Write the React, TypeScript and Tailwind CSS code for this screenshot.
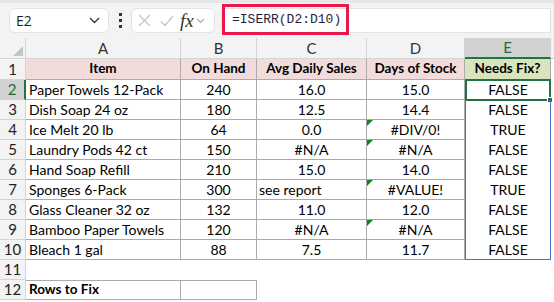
import React from 'react';

type Row = { item: string; onHand: string; avg: string; days: string; fix: string; flag?: boolean; left?: boolean };

const rows: Row[] = [
  { item: 'Paper Towels 12-Pack', onHand: '240', avg: '16.0', days: '15.0', fix: 'FALSE' },
  { item: 'Dish Soap 24 oz', onHand: '180', avg: '12.5', days: '14.4', fix: 'FALSE' },
  { item: 'Ice Melt 20 lb', onHand: '64', avg: '0.0', days: '#DIV/0!', fix: 'TRUE', flag: true },
  { item: 'Laundry Pods 42 ct', onHand: '150', avg: '#N/A', days: '#N/A', fix: 'FALSE', flag: true },
  { item: 'Hand Soap Refill', onHand: '210', avg: '15.0', days: '14.0', fix: 'FALSE' },
  { item: 'Sponges 6-Pack', onHand: '300', avg: 'see report', days: '#VALUE!', fix: 'TRUE', flag: true, left: true },
  { item: 'Glass Cleaner 32 oz', onHand: '132', avg: '11.0', days: '12.0', fix: 'FALSE' },
  { item: 'Bamboo Paper Towels', onHand: '120', avg: '#N/A', days: '#N/A', fix: 'FALSE', flag: true },
  { item: 'Bleach 1 gal', onHand: '88', avg: '7.5', days: '11.7', fix: 'FALSE' },
];

const cols = 'grid grid-cols-[26px_155px_76px_110px_98px_86px_3px]';
const cell = 'border-r border-b border-[#ababab] flex items-center justify-center';
const rowHead = 'bg-[#f3f3f3] border-r border-b border-[#d4d4d4] flex items-center justify-center text-[#222] text-[15px]';

function Flag() {
  return <span className="absolute left-0 top-0 w-0 h-0 border-t-[6px] border-r-[6px] border-t-[#1a7f2a] border-r-transparent" />;
}

export default function App() {
  return (
    <div className="w-[554px] h-[302px] bg-white overflow-hidden text-[14px] leading-none text-black" style={{ fontFamily: 'Lato, "Liberation Sans", sans-serif' }}>
      {/* formula bar */}
      <div className="relative h-[38px] bg-[#f3f3f3] border-t-[3px] border-[#e6e6e6] flex items-center pl-[9px] pr-[3px]">
        <div className="w-[100px] h-[25px] rounded-md bg-white border border-[#e3e3e3] flex items-center justify-between pl-[6px] pr-[8px] text-[14px] text-[#1f1f1f]" style={{ fontFamily: '"Open Sans", sans-serif' }}>
          <span>E2</span>
          <svg width="11" height="7" viewBox="0 0 11 7"><path d="M1 1l4.5 4.5L10 1" fill="none" stroke="#333" strokeWidth="1.3" /></svg>
        </div>
        <div className="w-[22px] flex flex-col items-center gap-[3px]">
          <span className="w-[3px] h-[3px] bg-[#333]" />
          <span className="w-[3px] h-[3px] bg-[#333]" />
          <span className="w-[3px] h-[3px] bg-[#333]" />
        </div>
        <div className="w-[84px] h-[25px] rounded-md bg-white border border-[#e3e3e3] flex items-center pl-[6px] gap-[9px]">
          <svg width="13" height="13" viewBox="0 0 13 13"><path d="M1 1l11 11M12 1L1 12" stroke="#c4c4c4" strokeWidth="1.2" /></svg>
          <svg width="14" height="12" viewBox="0 0 14 12"><path d="M1 6.5l4 4L13 1" fill="none" stroke="#c4c4c4" strokeWidth="1.2" /></svg>
          <span className="italic text-[19px] text-[#333] -ml-[3px]" style={{ fontFamily: '"Liberation Serif", serif' }}>fx</span>
          <svg width="9" height="6" viewBox="0 0 9 6" className="-ml-[7px]"><path d="M1 1l3.5 3.5L8 1" fill="none" stroke="#aaa" strokeWidth="1.1" /></svg>
        </div>
        <div className="ml-[6px] flex-1 h-[25px] bg-white border border-[#e3e3e3] rounded-l-md" />
        <div className="absolute left-[222px] top-[1px] w-[127px] h-[31px] border-[3px] border-[#e8194a] flex items-center pl-[7px] text-[13px] text-[#1f1f3f]" style={{ fontFamily: '"Liberation Mono", monospace' }}>
          =ISERR(D2:D10)
        </div>
      </div>

      {/* column headers */}
      <div className={`${cols} h-[21px] bg-[#f3f3f3] text-[#333] text-[15px]`}>
        <div className="relative border-r border-b border-[#d4d4d4]">
          <span className="absolute right-[2px] bottom-[2px] w-0 h-0 border-b-[10px] border-l-[10px] border-b-[#c4c4c4] border-l-transparent" />
        </div>
        {['A', 'B', 'C', 'D'].map((c) => (
          <div key={c} className="border-r border-b border-[#d4d4d4] flex items-center justify-center">{c}</div>
        ))}
        <div className="bg-[#d2d2d2] border-r border-[#d4d4d4] border-b-2 border-b-[#217346] flex items-center justify-center text-[#1e6b3c]">E</div>
        <div className="border-b border-[#d4d4d4]" />
      </div>

      {/* row 1 */}
      <div className={`${cols} h-[21px] font-bold text-[13.5px]`}>
        <div className={`${rowHead} font-normal`}>1</div>
        <div className={`${cell} bg-[#f2dcdb]`}>Item</div>
        <div className={`${cell} bg-[#f2dcdb]`}>On Hand</div>
        <div className={`${cell} bg-[#f2dcdb]`}>Avg Daily Sales</div>
        <div className={`${cell} bg-[#f2dcdb]`}>Days of Stock</div>
        <div className={`${cell} bg-[#d8e4bc]`}>Needs Fix?</div>
        <div />
      </div>

      {rows.map((r, i) => {
        const n = i + 2;
        const active = n === 2;
        const last = n === 10;
        return (
          <div key={n} className={`${cols} h-[20px]`}>
            <div className={active ? 'bg-[#d2d2d2] border-r-2 border-r-[#217346] border-b border-[#d4d4d4] flex items-center justify-center text-[#1e6b3c] text-[15px]' : rowHead}>{n}</div>
            <div className={`${cell} !justify-start pl-[3px] whitespace-nowrap`}>{r.item}</div>
            <div className={cell}>{r.onHand}</div>
            <div className={`${cell} ${r.left ? '!justify-start pl-[2px]' : ''}`}>{r.avg}</div>
            <div className={`${cell} relative`}>
              {r.flag && <Flag />}
              {r.days}
            </div>
            <div className={`relative flex items-center justify-center border-x border-[#4472c4] ${last ? 'border-b' : ''}`}>
              {active && (
                <div className="absolute -left-[1px] -top-[1px] -right-[1px] -bottom-[1px] border-2 border-[#217346]">
                  <span className="absolute -right-[4px] -bottom-[4px] w-[6px] h-[6px] bg-[#217346] border border-white" />
                </div>
              )}
              {r.fix}
            </div>
            <div />
          </div>
        );
      })}

      {/* row 11 */}
      <div className={`${cols} h-[20px]`}>
        <div className={rowHead}>11</div>
      </div>

      {/* row 12 */}
      <div className={`${cols} h-[20px]`}>
        <div className={rowHead}>12</div>
        <div className={`${cell} !justify-start pl-[3px] font-bold text-[13.5px] border-t`}>Rows to Fix</div>
        <div className={`${cell} border-t`} />
      </div>
    </div>
  );
}
